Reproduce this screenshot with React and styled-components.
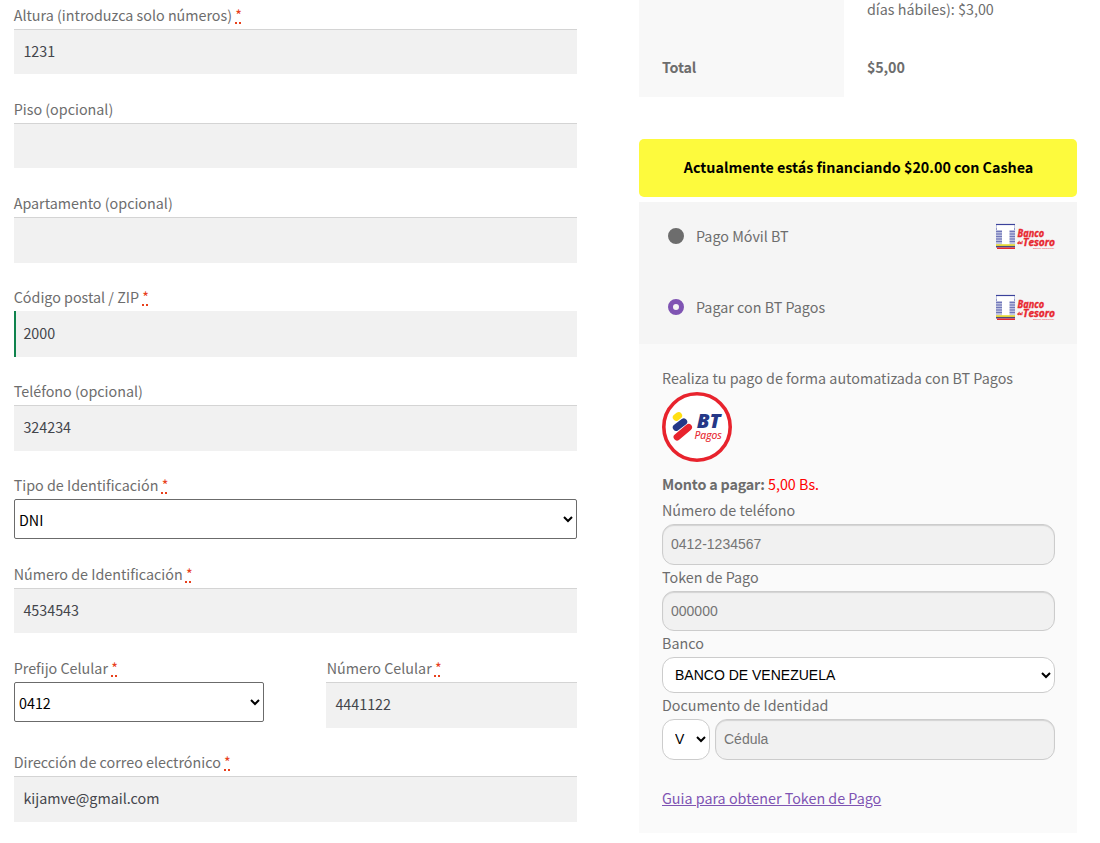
import React from "react";
import styled, { createGlobalStyle } from "styled-components";

const sans = `"Noto Sans CJK SC", "Noto Sans CJK JP", "Noto Sans", sans-serif`;
const arial = `"Liberation Sans", Arial, sans-serif`;

const Global = createGlobalStyle`
  *, *::before, *::after { box-sizing: border-box; }
  html, body { margin: 0; background: #fff; overflow: hidden; }
  body { font-family: ${sans}; font-size: 14.32px; line-height: 24px; color: #6d6d6d; }
`;

const Page = styled.div`
  display: flex;
  gap: 62px;
  width: 1100px;
  height: 843px;
  padding-left: 14px;
  overflow: hidden;
`;

const Billing = styled.form`
  width: 563px;
  padding-top: 3.07px;
`;

const Field = styled.div`
  display: flex;
  flex-direction: column;
  width: ${(p) => p.$width || "100%"};
  height: ${(p) => p.$height || 94.06}px;
`;

const FieldRow = styled.div`
  display: flex;
  justify-content: space-between;
`;

const Label = styled.label`
  display: block;
  height: 25.9px;
  flex: none;
  white-space: nowrap;
  margin-left: -0.3px;
  padding-left: ${(p) => p.$indent || 0}px;
`;

const Required = styled.abbr`
  color: #e8401c;
  text-decoration: underline dotted;
  text-decoration-thickness: 2px;
  text-underline-offset: 1px;
`;

const TextInput = styled.input`
  width: 100%;
  height: 45.46px;
  flex: none;
  margin: 0;
  padding: 0 9.4px 2px;
  padding-left: ${(p) => (p.$valid ? 7.4 : 9.4)}px;
  border: 0;
  border-left: ${(p) => (p.$valid ? "2px solid #0f834d" : "0")};
  border-radius: 0;
  outline: 0;
  background: #f1f1f1;
  box-shadow: ${(p) => (p.$valid ? "none" : "inset 0 1px 0 #d4d4d4")};
  color: #43454b;
  font: 400 14.32px ${sans};
`;

const Select = styled.select`
  width: 100%;
  height: 40px;
  flex: none;
  margin: 0;
  padding: 0;
  border: 1px solid #6b6b6b;
  border-radius: 2px;
  background: #fff;
  color: #000;
  font: 400 14.32px ${sans};
`;

const Order = styled.section`
  width: 438px;
`;

const Totals = styled.div`
  display: grid;
  grid-template-columns: 205px 1fr;
  grid-template-rows: 39px 58px;
`;

const HeadCell = styled.div`
  padding: ${(p) => p.$top || 0}px 23px 0;
  background: #f8f8f8;
  font-weight: ${(p) => (p.$strong ? 600 : 400)};
  letter-spacing: ${(p) => (p.$strong ? "-0.15px" : "normal")};
`;

const ValueCell = styled(HeadCell)`
  background: #fff;
  line-height: ${(p) => (p.$strong ? 24 : 18)}px;
`;

const Financing = styled.div`
  display: flex;
  align-items: center;
  justify-content: center;
  height: 58px;
  margin-top: 42px;
  padding: 0 0 2px 1px;
  border-radius: 5px;
  background: #fdfa3d;
  color: #000;
  font-weight: 700;
`;

const Methods = styled.div`
  margin-top: 5px;
  background: #f5f5f5;
`;

const Method = styled.div`
  display: flex;
  align-items: center;
  height: 71px;
  padding: 0 21px 2px 29px;
`;

const Radio = styled.span`
  width: 16px;
  height: 16px;
  margin: 0 12px 2px 0;
  border-radius: 50%;
  border: ${(p) => (p.$checked ? "5.3px solid #7f54b3" : "8px solid #6d6d6d")};
  background: #f5f5f5;
`;

const MethodName = styled.span`
  flex: 1;
  padding-bottom: 1px;
`;

const PaymentBox = styled.div`
  height: 489px;
  padding: 22px 22px 0 23px;
  background: #fafafa;
`;

const Intro = styled.div`
  height: 26px;
`;

const Badge = styled.svg`
  display: block;
`;

const Amount = styled.div`
  margin-top: 10px;
  height: 26px;
  span { color: #f00; }
  strong { font-weight: 700; letter-spacing: -0.18px; }
`;

const PayLabel = styled.label`
  display: block;
  height: 26px;
`;

const PayInput = styled.input`
  display: block;
  flex: 1;
  min-width: 0;
  width: 100%;
  height: ${(p) => p.$height || 41}px;
  margin: 0;
  padding: 0 8px ${(p) => (p.$height ? 0 : 2)}px;
  border: 1px solid #ccc;
  border-radius: 12px;
  outline: 0;
  background: #f1f1f1;
  box-shadow: inset 0 1px 1px rgba(0, 0, 0, 0.125);
  font: 14px ${arial};
  &::placeholder { color: #757575; opacity: 1; }
`;

const PaySelect = styled.select`
  display: block;
  width: ${(p) => p.$width || "100%"};
  height: ${(p) => p.$height}px;
  margin: 0;
  padding: 0 0 ${(p) => (p.$width ? 2 : 0)}px 8px;
  border: 1px solid #ccc;
  border-radius: 12px;
  background: #fff;
  color: #000;
  font: 14px ${arial};
`;

const DocumentRow = styled.div`
  display: flex;
  gap: 5px;
`;

const Guide = styled.a`
  display: inline-block;
  margin-top: 26px;
  color: #7f54b3;
  text-decoration: underline;
`;

const Star = () => <Required>*</Required>;

function BankLogo() {
  const bars = [6, 8.5, 11, 13.5, 16, 18.5];
  return (
    <svg width="61" height="27" viewBox="0 0 61 27">
      <rect x="1" y="1" width="19" height="21" fill="#c3c7e3" />
      <path d="M1 1.5H20" stroke="#3b429b" strokeWidth="1.2" />
      {bars.map((y) => (
        <path key={y} d={`M1 ${y}H20`} stroke="#7076b8" strokeWidth="1.2" />
      ))}
      <path d="M2 2.2H19V7H14.5V21.5H7V7H2Z" fill="#fff" />
      <rect x="1" y="21.3" width="19" height="1.6" fill="#f0e020" />
      <rect x="1" y="22.9" width="19" height="1.6" fill="#4a4a80" />
      <rect x="2" y="24.5" width="18" height="1.5" fill="#e8272f" />
      <g fill="#e8272f" stroke="#e8272f" strokeWidth=".35" fontFamily="Open Sans, sans-serif" fontStyle="italic" fontWeight="700">
        <text x="22.5" y="13.6" fontSize="9.8" textLength="26.5" lengthAdjust="spacingAndGlyphs">Banco</text>
        <text x="22.5" y="21.3" fontSize="4" textLength="5" lengthAdjust="spacingAndGlyphs">del</text>
        <text x="28" y="23" fontSize="10.3" textLength="32" lengthAdjust="spacingAndGlyphs">Tesoro</text>
      </g>
      <text x="38" y="26" fontSize="2.4" fill="#ee7076" fontFamily="Open Sans, sans-serif" fontStyle="italic" fontWeight="700" textLength="21" lengthAdjust="spacingAndGlyphs">Banco Universal</text>
    </svg>
  );
}

function PagosBadge() {
  return (
    <Badge width="70" height="70" viewBox="0 0 70 70">
      <circle cx="35" cy="35" r="33.2" fill="#fff" stroke="#e8232d" strokeWidth="3.6" />
      <g strokeLinecap="round" strokeWidth="6.8">
        <path d="M14.2 25.5L16.7 23.5" stroke="#ffdf12" />
        <path d="M14.2 35.5L21.8 29.8" stroke="#253887" />
        <path d="M15 45.1L26.6 35.3" stroke="#e8232d" />
      </g>
      <text x="34.8" y="36" fill="#253887" fontFamily="Open Sans, sans-serif" fontSize="19.5" fontStyle="italic" fontWeight="800" textLength="24" lengthAdjust="spacingAndGlyphs">BT</text>
      <text x="32.5" y="46.6" fill="#e8232d" stroke="#e8232d" strokeWidth=".15" fontFamily="Open Sans, sans-serif" fontSize="11" fontStyle="italic" textLength="27.3" lengthAdjust="spacingAndGlyphs">Pagos</text>
    </Badge>
  );
}

export default function App() {
  return (
    <>
      <Global />
      <Page>
        <Billing>
          <Field>
            <Label>Altura (introduzca solo números) <Star /></Label>
            <TextInput defaultValue="1231" />
          </Field>
          <Field>
            <Label>Piso (opcional)</Label>
            <TextInput />
          </Field>
          <Field>
            <Label>Apartamento (opcional)</Label>
            <TextInput />
          </Field>
          <Field>
            <Label>Código postal / ZIP <Star /></Label>
            <TextInput $valid defaultValue="2000" />
          </Field>
          <Field>
            <Label>Teléfono (opcional)</Label>
            <TextInput defaultValue="324234" />
          </Field>
          <Field $height={88.76}>
            <Label>Tipo de Identificación <Star /></Label>
            <Select><option>DNI</option></Select>
          </Field>
          <Field $height={94.18}>
            <Label>Número de Identificación <Star /></Label>
            <TextInput defaultValue="4534543" />
          </Field>
          <FieldRow>
            <Field $width="250px">
              <Label>Prefijo Celular <Star /></Label>
              <Select><option>0412</option></Select>
            </Field>
            <Field $width="251px">
              <Label $indent={1}>Número Celular <Star /></Label>
              <TextInput defaultValue="4441122" />
            </Field>
          </FieldRow>
          <Field>
            <Label>Dirección de correo electrónico <Star /></Label>
            <TextInput defaultValue="kijamve@gmail.com" />
          </Field>
        </Billing>

        <Order>
          <Totals>
            <HeadCell />
            <ValueCell>días hábiles): $3,00</ValueCell>
            <HeadCell $strong $top={16}>Total</HeadCell>
            <ValueCell $strong $top={16}>$5,00</ValueCell>
          </Totals>
          <Financing>Actualmente estás financiando $20.00 con Cashea</Financing>
          <Methods>
            <Method>
              <Radio />
              <MethodName>Pago Móvil BT</MethodName>
              <BankLogo />
            </Method>
            <Method>
              <Radio $checked />
              <MethodName>Pagar con BT Pagos</MethodName>
              <BankLogo />
            </Method>
          </Methods>
          <PaymentBox>
            <Intro>Realiza tu pago de forma automatizada con BT Pagos</Intro>
            <PagosBadge />
            <Amount><strong>Monto a pagar:</strong> <span>5,00 Bs.</span></Amount>
            <PayLabel>Número de teléfono</PayLabel>
            <PayInput placeholder="0412-1234567" />
            <PayLabel>Token de Pago</PayLabel>
            <PayInput $height={40} placeholder="000000" />
            <PayLabel>Banco</PayLabel>
            <PaySelect $height={36}><option>BANCO DE VENEZUELA</option></PaySelect>
            <PayLabel>Documento de Identidad</PayLabel>
            <DocumentRow>
              <PaySelect $width="48px" $height={41}><option>V</option></PaySelect>
              <PayInput placeholder="Cédula" />
            </DocumentRow>
            <Guide>Guia para obtener Token de Pago</Guide>
          </PaymentBox>
        </Order>
      </Page>
    </>
  );
}
